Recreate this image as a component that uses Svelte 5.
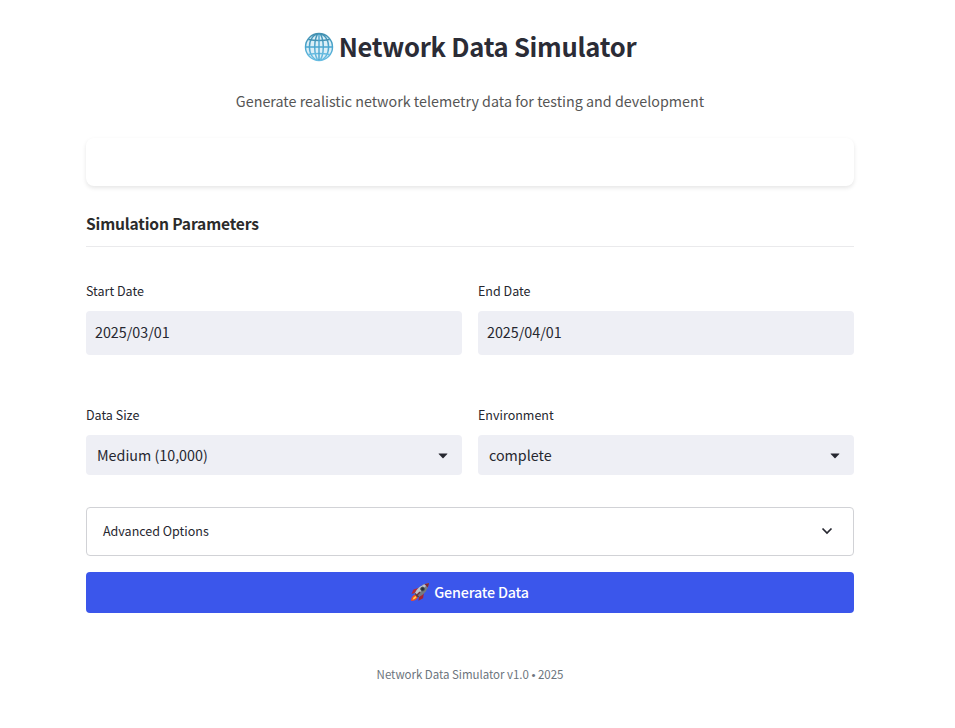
<script>
  const dates = [
    { label: 'Start Date', value: '2025/03/01' },
    { label: 'End Date', value: '2025/04/01' }
  ];
  const selects = [
    { label: 'Data Size', value: 'Medium (10,000)' },
    { label: 'Environment', value: 'complete' }
  ];
</script>

<main>
  <h1>
    <svg class="globe" viewBox="0 0 30 30" aria-hidden="true">
      <defs>
        <linearGradient id="ring" x1="0" y1="0" x2="0" y2="1">
          <stop offset="0" stop-color="#4390b0" />
          <stop offset=".5" stop-color="#4ba6cf" />
          <stop offset="1" stop-color="#68bde2" />
        </linearGradient>
      </defs>
      <g fill="none" stroke="url(#ring)" stroke-width="1.45">
        <circle cx="15" cy="15" r="13.5" fill="#dceff7" />
        <ellipse cx="15" cy="15" rx="9.6" ry="13.2" />
        <ellipse cx="15" cy="15" rx="4.3" ry="13.2" />
        <path d="M4.300 7.500Q15 9.500 25.700 7.500M4.300 22.500Q15 20.500 25.700 22.500" />
      </g>
      <path d="M15 1.7v26.6M1.7 15h26.6" stroke="#4ba6cf" stroke-width="1.4" />
    </svg>
    <span>Network Data Simulator</span>
  </h1>
  <p class="subtitle">Generate realistic network telemetry data for testing and development</p>
  <div class="card"></div>
  <h2>Simulation Parameters</h2>

  <div class="row dates">
    {#each dates as field}
      <div class="field">
        <div class="label">{field.label}</div>
        <div class="date">{field.value}</div>
      </div>
    {/each}
  </div>

  <div class="row selects">
    {#each selects as field}
      <div class="field">
        <div class="label">{field.label}</div>
        <div class="select">
          <span>{field.value}</span>
          <svg width="10" height="6" viewBox="0 0 10 6"><path d="M1 .5h8q.8 0 .3.6L5.5 5q-.5.4-1 0L.7 1.1Q.2.5 1 .5z" fill="#262730" /></svg>
        </div>
      </div>
    {/each}
  </div>

  <div class="expander">
    <span>Advanced Options</span>
    <svg width="12" height="8" viewBox="0 0 12 8"><path d="M1.5 1.5L6 6l4.500-4.500" fill="none" stroke="#262730" stroke-width="1.7" /></svg>
  </div>

  <button>
    <svg class="rocket" viewBox="0 0 20 20" aria-hidden="true">
      <path d="M5 11L1.500 12l2-4.500L9 5.800z" fill="#b52b37" />
      <path d="M9 15l-.6 3.700 4.700-2.500L14 10z" fill="#a82332" />
      <path d="M5.500 12.500Q1 13.500 1 19q5.500 0 7-4z" fill="#f04b25" />
      <path d="M5.600 14Q3 15 2.500 17.700q3-.5 4-2.400z" fill="#ffd34d" />
      <path d="M4.500 12Q8 3 19 1q-1.500 10.500-11 14.500z" fill="#757b83" />
      <path d="M4.500 12Q8 3 19 1L6.300 13.800z" fill="#bec4ca" />
      <path d="M14.500 2.300Q16.500 1.300 19 1q-.3 2.500-1.300 4.500z" fill="#812938" />
      <circle cx="12.600" cy="7" r="1.900" fill="#202d38" stroke="#4b535a" />
      <path d="M5 11.500l3.500 3.600" stroke="#4d3b43" stroke-width="1.400" />
      <path d="M6 14l4-4" stroke="#76303a" stroke-width="1.500" />
    </svg>
    <span>Generate Data</span>
  </button>
  <footer>Network Data Simulator v1.0 <span class="dot">•</span> 2025</footer>
</main>

<style>
  :global(body) {
    margin: 0;
    background: #fff;
  }
  main {
    box-sizing: border-box;
    width: 768px;
    height: 728px;
    margin-left: 86px;
    padding-top: 26px;
    font-family: 'Noto Sans CJK SC', 'Noto Sans', sans-serif;
    color: #262730;
    font-size: 14.3px;
  }
  h1 {
    display: flex;
    justify-content: center;
    align-items: center;
    gap: 5px;
    height: 40px;
    margin: 0;
    color: #2b2c36;
    font-size: 25.6px;
    line-height: 40px;
    font-weight: 700;
    letter-spacing: -0.28px;
    white-space: nowrap;
  }
  .globe {
    width: 30px;
    height: 30px;
    margin-top: 1px;
  }
  .subtitle {
    margin: 23px 0 0;
    height: 24px;
    line-height: 24px;
    text-align: center;
    color: #555;
    letter-spacing: 0.015px;
    white-space: nowrap;
  }
  .card {
    height: 48px;
    margin-top: 25px;
    border-radius: 8px;
    background: #fff;
    box-shadow: 0 2px 4px rgba(0, 0, 0, 0.1);
  }
  h2 {
    box-sizing: border-box;
    height: 37px;
    margin: 24px 0 0;
    padding-bottom: 8px;
    border-bottom: 1px solid #eaeaec;
    color: #2b2b2b;
    font-size: 15.6px;
    line-height: 26px;
    font-weight: 700;
    letter-spacing: -0.15px;
  }
  .row {
    display: grid;
    grid-template-columns: 1fr 1fr;
    gap: 16px;
  }
  .dates {
    margin-top: 34px;
  }
  .selects {
    margin-top: 50px;
  }
  .label {
    height: 20px;
    margin-bottom: 10px;
    font-size: 12.5px;
    line-height: 19px;
  }
  .date {
    height: 44px;
    padding-left: 9px;
    border-radius: 4px;
    background: #eeeff5;
    line-height: 42px;
  }
  .select {
    display: flex;
    align-items: center;
    justify-content: space-between;
    height: 40px;
    padding: 0 14px 0 11px;
    border-radius: 4px;
    background: #eeeff5;
    line-height: 40px;
  }
  .select svg {
    margin-top: 1px;
  }
  .expander {
    box-sizing: border-box;
    display: flex;
    align-items: center;
    justify-content: space-between;
    height: 49px;
    margin-top: 32px;
    padding: 0 20px 2px 16px;
    border: 1px solid #d1d2d6;
    border-radius: 4px;
    font-size: 12.5px;
  }
  button {
    display: flex;
    align-items: center;
    justify-content: center;
    gap: 4px;
    width: 100%;
    height: 41px;
    margin: 16px 0 0;
    padding: 0 1px 2px 0;
    border: 0;
    border-radius: 4px;
    background: #3b56eb;
    color: #fff;
    font-family: inherit;
    font-size: 14.3px;
    font-weight: 500;
    letter-spacing: -0.17px;
  }
  .rocket {
    width: 20px;
    height: 20px;
  }
  footer {
    margin-top: 51px;
    text-align: center;
    color: #6c757d;
    font-size: 11.5px;
    line-height: 20px;
    letter-spacing: -0.03px;
  }
  .dot {
    font-family: 'Liberation Sans', sans-serif;
    line-height: 1;
  }
</style>
